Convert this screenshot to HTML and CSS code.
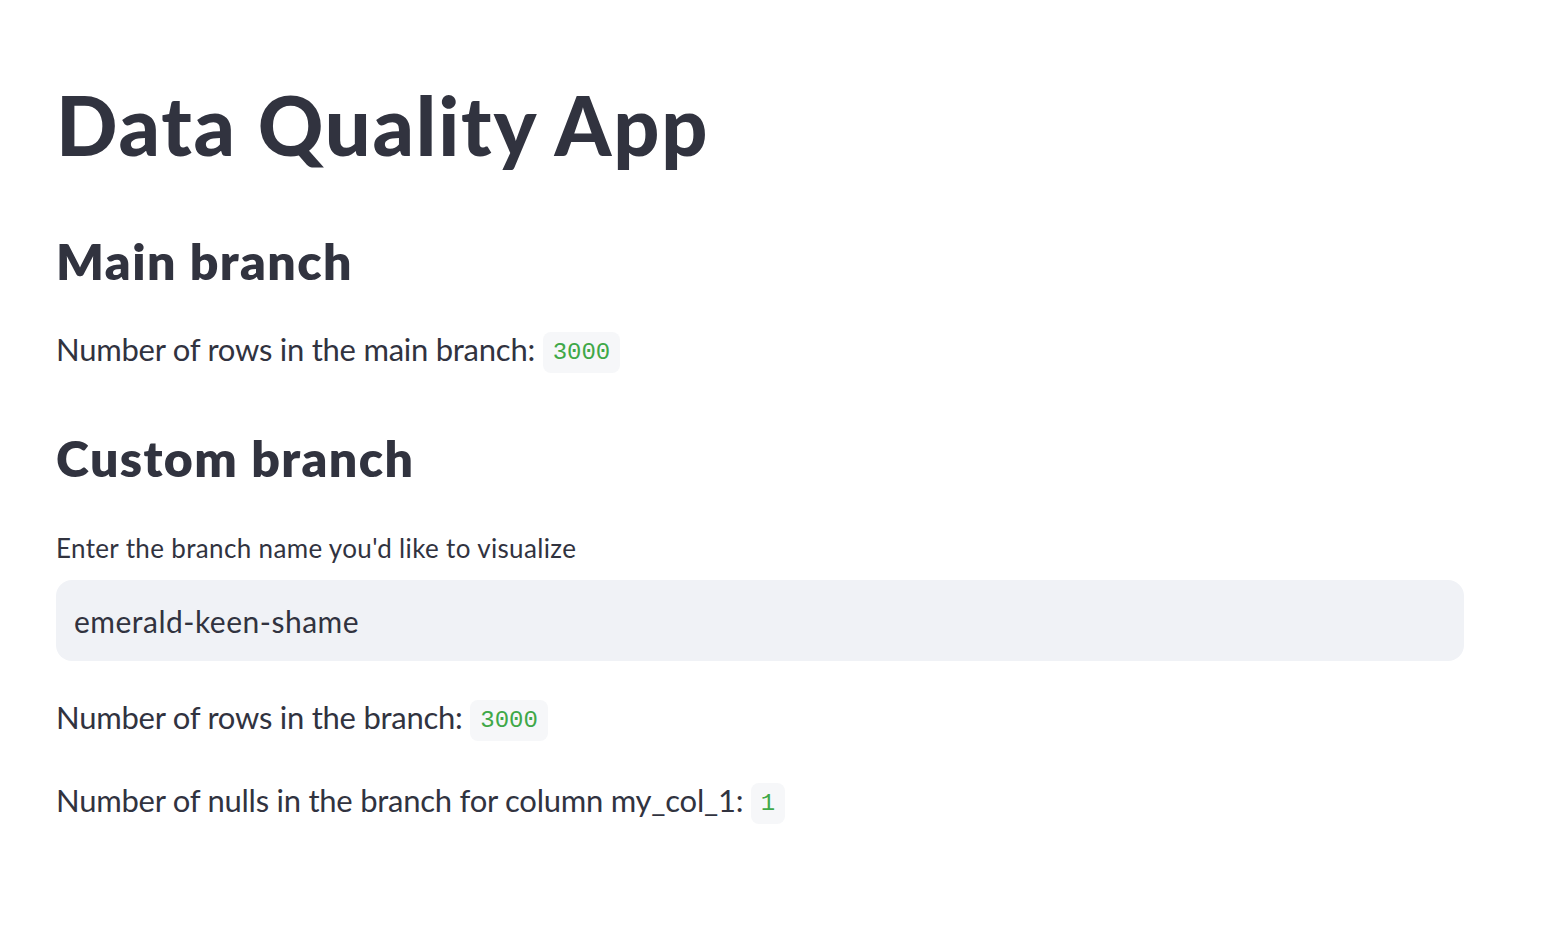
FILE: index.html
```html
<!DOCTYPE html>
<html lang="en">
<head>
<meta charset="utf-8">
<title>Data Quality App</title>
<link rel="stylesheet" href="styles.css">
</head>
<body>
<main class="page">
  <h1 class="title">Data Quality App</h1>
  <h2 class="heading heading-main">Main branch</h2>
  <p class="para para-first">Number of rows in the main branch: <code class="code">3000</code></p>
  <h2 class="heading heading-custom">Custom branch</h2>
  <label class="label" for="branch">Enter the branch name you'd like to visualize</label>
  <div class="input-wrap">
    <input class="input" id="branch" type="text" value="emerald-keen-shame">
  </div>
  <p class="para para-second">Number of rows in the branch: <code class="code">3000</code></p>
  <p class="para para-third">Number of nulls in the branch for column my_col_1: <code class="code">1</code></p>
</main>
</body>
</html>
```
FILE: styles.css
```css
html, body {
  margin: 0;
  padding: 0;
  background: #ffffff;
}

body {
  font-family: Lato, "Noto Sans", sans-serif;
  color: #31333f;
}

.page {
  display: flex;
  flex-direction: column;
  align-items: flex-start;
  width: 1408px;
  padding: 75px 0 0 56px;
}

.title {
  margin: 0;
  font-size: 81px;
  line-height: 100px;
  font-weight: 900;
  letter-spacing: 1.8px;
}

.heading {
  margin: 0;
  font-size: 50px;
  line-height: 60px;
  font-weight: 800;
  letter-spacing: 1.4px;
}

.heading-main { margin-top: 56px; }
.heading-custom { margin-top: 55px; }

.para {
  margin: 0;
  font-size: 31px;
  line-height: 48px;
  font-weight: 400;
  letter-spacing: -0.25px;
}

.para-first { margin-top: 34px; }
.para-second { margin-top: 32px; }
.para-third { margin-top: 35px; }

.code {
  display: inline-block;
  vertical-align: 2px;
  font-family: "Liberation Mono", "DejaVu Sans Mono", monospace;
  font-size: 24px;
  line-height: 27px;
  padding: 7px 10px;
  border-radius: 8px;
  background: #f6f7f9;
  color: #3fa848;
  letter-spacing: 0;
}

.label {
  margin-top: 42px;
  font-size: 26px;
  line-height: 36px;
  letter-spacing: 0.35px;
}

.input-wrap {
  margin-top: 14px;
  width: 1408px;
  height: 81px;
  display: flex;
  align-items: center;
  background: #f0f2f6;
  border-radius: 16px;
}

.input {
  width: 100%;
  border: 0;
  outline: none;
  background: transparent;
  padding: 0 18px;
  font-family: Lato, "Noto Sans", sans-serif;
  font-size: 30px;
  letter-spacing: 0.5px;
  color: #31333f;
}
```
